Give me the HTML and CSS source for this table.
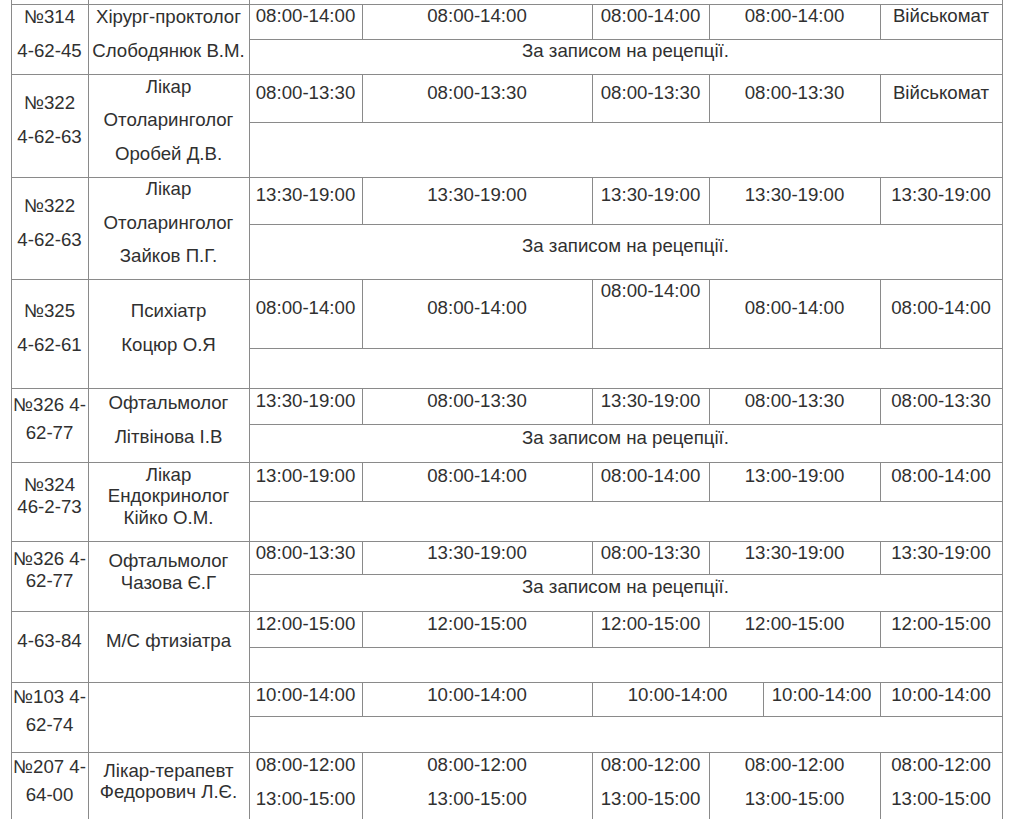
FILE: index.html
```html
<!DOCTYPE html>
<html lang="uk">
<head>
<meta charset="utf-8">
<title>Графік прийому</title>
<link rel="stylesheet" href="styles.css">
</head>
<body>
<table class="sched">
  <colgroup>
    <col class="c-room"><col class="c-doc"><col class="c-d1"><col class="c-d2"><col class="c-d3"><col class="c-d4a"><col class="c-d4b"><col class="c-d5">
  </colgroup>
  <tbody>
    <tr class="cut"><td></td><td></td><td colspan="6"></td></tr>

    <tr class="h35">
      <td rowspan="2"><p>№314</p><p>4-62-45</p></td>
      <td rowspan="2"><p>Хірург-проктолог</p><p>Слободянюк В.М.</p></td>
      <td><p>08:00-14:00</p></td><td><p>08:00-14:00</p></td><td><p>08:00-14:00</p></td><td colspan="2"><p>08:00-14:00</p></td><td><p>Військомат</p></td>
    </tr>
    <tr class="h35"><td colspan="6"><p>За записом на рецепції.</p></td></tr>

    <tr class="h48">
      <td rowspan="2"><p>№322</p><p>4-62-63</p></td>
      <td rowspan="2" class="tight"><p>Лікар</p><p>Отоларинголог</p><p>Оробей Д.В.</p></td>
      <td><p>08:00-13:30</p></td><td><p>08:00-13:30</p></td><td><p>08:00-13:30</p></td><td colspan="2"><p>08:00-13:30</p></td><td><p>Військомат</p></td>
    </tr>
    <tr class="h55"><td colspan="6"></td></tr>

    <tr class="h47">
      <td rowspan="2"><p>№322</p><p>4-62-63</p></td>
      <td rowspan="2" class="tight"><p>Лікар</p><p>Отоларинголог</p><p>Зайков П.Г.</p></td>
      <td><p>13:30-19:00</p></td><td><p>13:30-19:00</p></td><td><p>13:30-19:00</p></td><td colspan="2"><p>13:30-19:00</p></td><td><p>13:30-19:00</p></td>
    </tr>
    <tr class="h55"><td colspan="6"><p>За записом на рецепції.</p></td></tr>

    <tr class="h69">
      <td rowspan="2"><p>№325</p><p>4-62-61</p></td>
      <td rowspan="2"><p>Психіатр</p><p>Коцюр О.Я</p></td>
      <td><p>08:00-14:00</p></td><td><p>08:00-14:00</p></td><td class="top"><p>08:00-14:00</p></td><td colspan="2"><p>08:00-14:00</p></td><td><p>08:00-14:00</p></td>
    </tr>
    <tr class="h40"><td colspan="6"></td></tr>

    <tr class="h36">
      <td rowspan="2" class="wrap"><p>№326 4-62-77</p></td>
      <td rowspan="2"><p>Офтальмолог</p><p>Літвінова І.В</p></td>
      <td><p>13:30-19:00</p></td><td><p>08:00-13:30</p></td><td><p>13:30-19:00</p></td><td colspan="2"><p>08:00-13:30</p></td><td><p>08:00-13:30</p></td>
    </tr>
    <tr class="h38"><td colspan="6"><p>За записом на рецепції.</p></td></tr>

    <tr class="h39">
      <td rowspan="2" class="wrap-s"><p>№324 46-2-73</p></td>
      <td rowspan="2"><p>Лікар<br>Ендокринолог<br>Кійко О.М.</p></td>
      <td><p>13:00-19:00</p></td><td><p>08:00-14:00</p></td><td><p>08:00-14:00</p></td><td colspan="2"><p>13:00-19:00</p></td><td><p>08:00-14:00</p></td>
    </tr>
    <tr class="h40"><td colspan="6"></td></tr>

    <tr class="h33 sm">
      <td rowspan="2" class="wrap-s"><p>№326 4-62-77</p></td>
      <td rowspan="2"><p>Офтальмолог<br>Чазова Є.Г</p></td>
      <td><p>08:00-13:30</p></td><td><p>13:30-19:00</p></td><td><p>08:00-13:30</p></td><td colspan="2"><p>13:30-19:00</p></td><td><p>13:30-19:00</p></td>
    </tr>
    <tr class="h37"><td colspan="6"><p>За записом на рецепції.</p></td></tr>

    <tr class="h36">
      <td rowspan="2"><p>4-63-84</p></td>
      <td rowspan="2"><p>М/С фтизіатра</p></td>
      <td><p>12:00-15:00</p></td><td><p>12:00-15:00</p></td><td><p>12:00-15:00</p></td><td colspan="2"><p>12:00-15:00</p></td><td><p>12:00-15:00</p></td>
    </tr>
    <tr class="h35"><td colspan="6"></td></tr>

    <tr class="h34 sm">
      <td rowspan="2" class="wrap"><p>№103 4-62-74</p></td>
      <td rowspan="2"></td>
      <td><p>10:00-14:00</p></td><td><p>10:00-14:00</p></td><td colspan="2"><p>10:00-14:00</p></td><td><p>10:00-14:00</p></td><td><p>10:00-14:00</p></td>
    </tr>
    <tr class="h36"><td colspan="6"></td></tr>

    <tr class="h70">
      <td class="wrap"><p>№207 4-64-00</p></td>
      <td><p>Лікар-терапевт<br>Федорович Л.Є.</p></td>
      <td><p>08:00-12:00</p><p>13:00-15:00</p></td><td><p>08:00-12:00</p><p>13:00-15:00</p></td><td><p>08:00-12:00</p><p>13:00-15:00</p></td><td colspan="2"><p>08:00-12:00</p><p>13:00-15:00</p></td><td><p>08:00-12:00</p><p>13:00-15:00</p></td>
    </tr>
  </tbody>
</table>
</body>
</html>
```

FILE: styles.css
```css
html, body {
  margin: 0;
  padding: 0;
  background: #ffffff;
}

body {
  font-family: "Liberation Sans", Arial, sans-serif;
  font-size: 18.67px;
  color: #303030;
}

.sched {
  border-collapse: collapse;
  table-layout: fixed;
  width: 992px;
  margin-left: 10.5px;
}

.c-room { width: 77px; }
.c-doc { width: 161px; }
.c-d1 { width: 113px; }
.c-d2 { width: 230px; }
.c-d3 { width: 117px; }
.c-d4a { width: 54px; }
.c-d4b { width: 117px; }
.c-d5 { width: 122px; }

.sched td {
  border: 1px solid #8a8a8a;
  padding: 0 1px;
  text-align: center;
  vertical-align: middle;
}

.sched p {
  margin: 0 0 12.5px;
  line-height: 21.5px;
}

.sched .cut td {
  border-top: none;
  height: 4px;
}

.sched td.top { vertical-align: top; }
.sched td.tight p { margin-bottom: 12px; }
.sched td.wrap p { line-height: 28px; }
.sched td.wrap-s p { line-height: 22px; }
.sched tr.sm td p { margin-bottom: 10px; }
.sched tr.sm td.wrap p,
.sched tr.sm td.wrap-s p { margin-bottom: 12.5px; }

.h33 { height: 33px; }
.h34 { height: 34px; }
.h35 { height: 35px; }
.h36 { height: 36px; }
.h37 { height: 37px; }
.h38 { height: 38px; }
.h39 { height: 39px; }
.h40 { height: 40px; }
.h47 { height: 47px; }
.h48 { height: 48px; }
.h55 { height: 55px; }
.h69 { height: 69px; }
.h70 { height: 70px; }
```
